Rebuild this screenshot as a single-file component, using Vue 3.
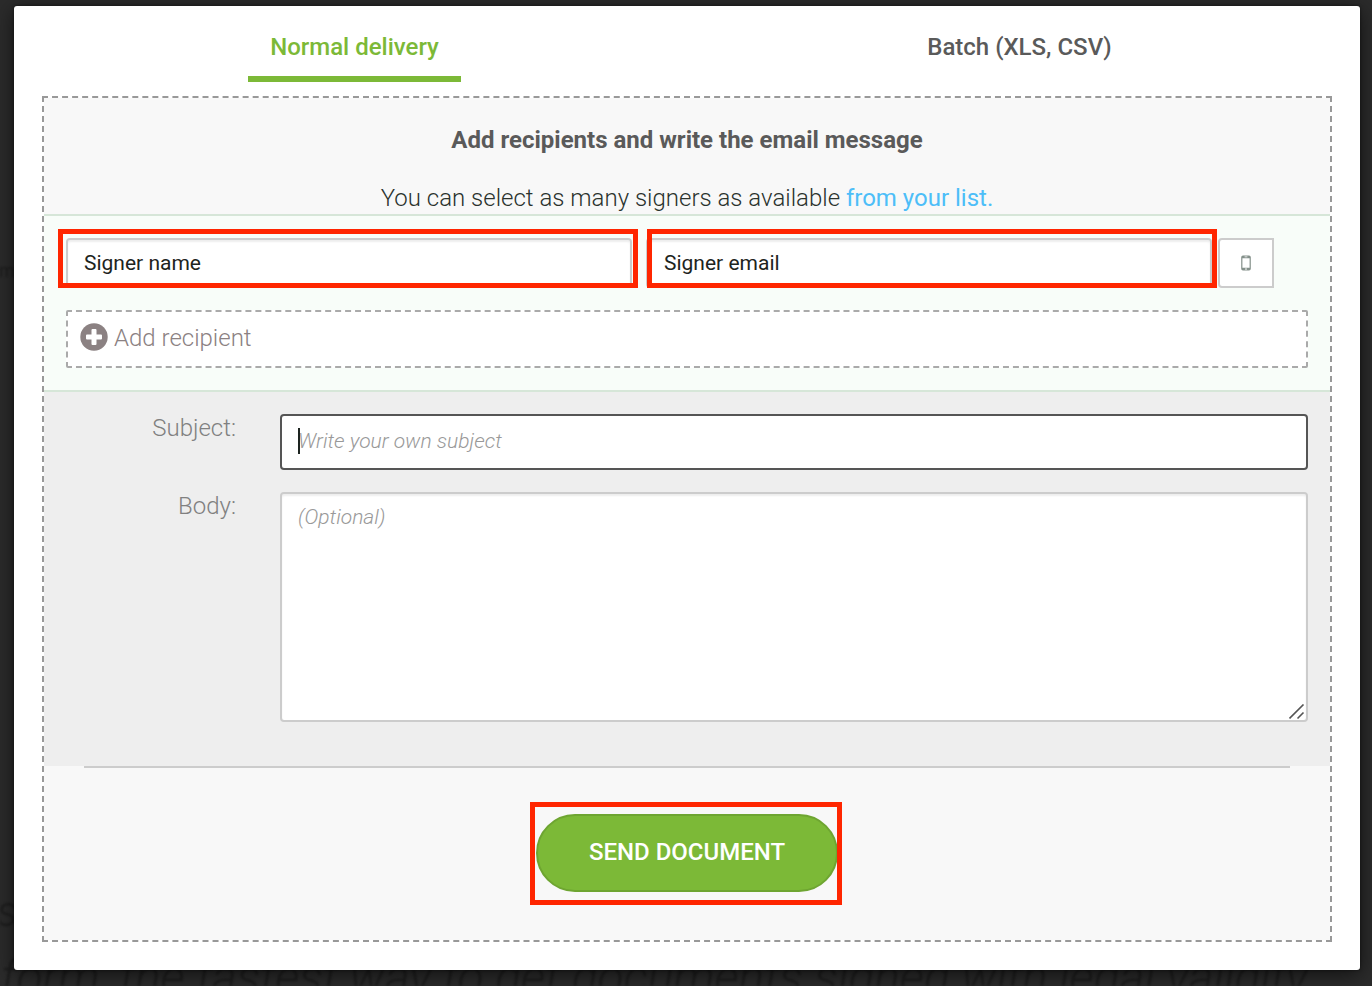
<script setup>
import { ref } from 'vue'

const tabs = [
  { id: 'normal', label: 'Normal delivery' },
  { id: 'batch', label: 'Batch (XLS, CSV)' },
]
const activeTab = ref('normal')
const signerName = ref('Signer name')
const signerEmail = ref('Signer email')
const subject = ref('')
const body = ref('')
</script>

<template>
  <div class="page">
    <div class="backdrop" aria-hidden="true">
      <span class="ghost ghost-small">m</span>
      <span class="ghost ghost-mid">s</span>
      <span class="ghost ghost-line">form, the fastest way to get documents signed with legal validity</span>
    </div>

    <main class="modal" role="dialog" aria-labelledby="dialog-title">
      <nav class="tabs" role="tablist">
        <div v-for="tab in tabs" :key="tab.id" class="tab-cell">
          <button
            type="button"
            role="tab"
            class="tab"
            :class="{ active: activeTab === tab.id }"
            :aria-selected="activeTab === tab.id"
            @click="activeTab = tab.id"
          >
            {{ tab.label }}
          </button>
        </div>
      </nav>

      <form class="panel" @submit.prevent>
        <header class="intro">
          <h1 id="dialog-title">Add recipients and write the email message</h1>
          <p>You can select as many signers as available <a href="#list">from your list.</a></p>
        </header>

        <section class="recipients">
          <div class="signer">
            <div class="signer-field name">
              <input v-model="signerName" class="field" type="text" aria-label="Signer name" />
              <span class="highlight"></span>
            </div>
            <div class="signer-field email">
              <input v-model="signerEmail" class="field" type="text" aria-label="Signer email" />
              <span class="highlight"></span>
            </div>
            <button type="button" class="phone" aria-label="Add phone number">
              <svg width="10" height="16" viewBox="0 0 10 16">
                <path
                  fill="#84908a"
                  fill-rule="evenodd"
                  d="M2 0.5h6a1.8 1.8 0 0 1 1.8 1.8v11.4a1.8 1.8 0 0 1-1.8 1.8H2a1.8 1.8 0 0 1-1.8-1.8V2.300a1.800 1.800 0 0 1 1.800-1.800zM1.400 3.300v9.400h7.200V3.300zM3.600 1.500v.8h2.800v-.8zM5 13.300a.8.8 0 1 0 0 1.600.8.8 0 0 0 0-1.600z"
                />
              </svg>
            </button>
          </div>
          <button type="button" class="add">
            <svg width="28" height="28" viewBox="0 0 28 28">
              <circle cx="14" cy="14" r="13.7" fill="#8b8182" />
              <path
                fill="#fff"
                d="M12.500 6h3a1 1 0 0 1 1 1v4.500H21a1 1 0 0 1 1 1v3a1 1 0 0 1-1 1h-4.500V21a1 1 0 0 1-1 1h-3a1 1 0 0 1-1-1v-4.500H7a1 1 0 0 1-1-1v-3a1 1 0 0 1 1-1h4.500V7a1 1 0 0 1 1-1z"
              />
            </svg>
            <span class="add-label">Add recipient</span>
          </button>
        </section>

        <section class="message">
          <label for="subject">Subject:</label>
          <div class="control">
            <input
              id="subject"
              v-model="subject"
              class="field subject"
              type="text"
              placeholder="Write your own subject"
            />
            <span class="caret"></span>
          </div>
          <label for="body">Body:</label>
          <div class="control">
            <textarea id="body" v-model="body" class="field body" placeholder="(Optional)"></textarea>
            <svg class="grip" width="16" height="16" viewBox="0 0 16 16">
              <path d="M0.500 14.500L14.500 0.500M8.500 14.500L14.500 8.500" fill="none" stroke="#555" stroke-width="1.6" />
            </svg>
          </div>
        </section>

        <footer class="actions">
          <hr />
          <div class="send-wrap">
            <button type="submit" class="send">SEND DOCUMENT</button>
            <span class="highlight"></span>
          </div>
        </footer>
      </form>
    </main>
  </div>
</template>

<style>
body {
  margin: 0;
  background: #2b2b2b;
}
</style>

<style scoped>
.page,
.page * {
  box-sizing: border-box;
}

.page {
  position: relative;
  overflow: hidden;
  min-height: 100vh;
  padding: 6px 12px 16px 14px;
  background: #2b2b2b;
  font-family: Roboto, "Liberation Sans", sans-serif;
  font-size: 24px;
  font-weight: 300;
  line-height: 28px;
  color: #2a322d;
}

button,
input,
textarea {
  font: inherit;
  margin: 0;
}

button {
  cursor: pointer;
}

.backdrop {
  position: absolute;
  inset: 0;
  overflow: hidden;
  color: #1c1c1c;
  filter: blur(1px);
}

.ghost {
  position: absolute;
  white-space: nowrap;
}

.ghost-small {
  left: -1px;
  top: 257px;
  font-size: 18px;
  font-weight: 400;
}

.ghost-mid {
  left: -3px;
  top: 890px;
  font-size: 42px;
  line-height: 44px;
  font-style: italic;
}

.ghost-line {
  left: 1px;
  top: 954px;
  font-size: 48px;
  line-height: 48px;
  font-style: italic;
}

.modal {
  position: relative;
  padding: 0 28px 28px;
  background: #fff;
  border-radius: 3px;
  box-shadow: 0 4px 20px rgba(0, 0, 0, 0.6), 0 0 3px rgba(0, 0, 0, 0.5);
}

.tabs {
  display: grid;
  grid-template-columns: 1fr 1fr;
  margin: 0 -20px 14px;
}

.tab-cell {
  text-align: center;
}

.tab {
  padding: 27px 22px 15px;
  border: 0;
  border-bottom: 6px solid transparent;
  background: none;
  font-weight: 500;
  color: #5a5a5a;
  vertical-align: top;
}

.tab.active {
  color: #7cb937;
  border-bottom-color: #7cb937;
}

.panel {
  border: 2px dashed #999;
  background: #f8f8f8;
  background-clip: padding-box;
}

.intro {
  padding: 28px 20px 2px;
  text-align: center;
}

.intro h1 {
  margin: 0 0 30px;
  font-size: 24px;
  line-height: 28px;
  font-weight: 700;
  color: #5a5a5a;
}

.intro p {
  margin: 0;
}

.intro a {
  color: #4dbef8;
  text-decoration: none;
  font-weight: 400;
}

.recipients {
  display: flex;
  flex-direction: column;
  gap: 22px;
  padding: 22px;
  border-top: 2px solid #d6e6d8;
  border-bottom: 2px solid #d6e6d8;
  background: #f8fdf9;
}

.signer {
  display: flex;
  padding-right: 34px;
}

.signer-field {
  position: relative;
  flex: 1;
}

.field {
  display: block;
  width: 100%;
  border: 2px solid #ccc;
  border-radius: 4px;
  background: #fff;
  box-shadow: inset 0 2px 2px rgba(0, 0, 0, 0.07);
  color: #1d2420;
  font-size: 21px;
  line-height: 26px;
  outline: none;
}

.signer-field .field {
  height: 50px;
  padding: 10px 16px;
  font-weight: 400;
}

.signer-field.name {
  margin-right: 14px;
}

.signer-field.email {
  margin-right: 6px;
}

.highlight {
  position: absolute;
  border: 5px solid #ff2600;
  pointer-events: none;
}

.name .highlight {
  inset: -9px -6px 0 -8px;
}

.email .highlight {
  inset: -9px -5px 0 1px;
}

.phone {
  display: flex;
  align-items: center;
  justify-content: center;
  width: 56px;
  height: 50px;
  padding: 0;
  border: 2px solid #ccc;
  border-radius: 4px 0 0 4px;
  background: #fff;
}

.add {
  display: flex;
  align-items: center;
  gap: 6px;
  height: 58px;
  padding: 0 12px 4px;
  border: 2px dashed #aaa;
  border-radius: 2px;
  background: #fff;
  color: #8b8182;
  font-weight: 300;
}

.add-label {
  padding-top: 2px;
}

.message {
  display: grid;
  grid-template-columns: 170px 1fr;
  column-gap: 44px;
  row-gap: 22px;
  padding: 22px 22px 44px;
  background: #eee;
}

.message label {
  text-align: right;
  color: #808080;
}

.control {
  position: relative;
}

.subject {
  height: 56px;
  padding: 0 16px 2px;
  border-color: #555;
  box-shadow: none;
}

.body {
  height: 230px;
  padding: 10px 16px;
  resize: none;
}

.field::placeholder {
  color: #999;
  opacity: 1;
  font-style: italic;
  font-weight: 300;
}

.caret {
  position: absolute;
  left: 18px;
  top: 14px;
  width: 2px;
  height: 26px;
  background: #1d2420;
}

.grip {
  position: absolute;
  right: 3px;
  bottom: 2px;
  pointer-events: none;
}

.actions {
  padding-bottom: 48px;
  text-align: center;
}

.actions hr {
  margin: 0 40px 46px;
  border: 0;
  border-top: 2px solid #ccc;
}

.send-wrap {
  position: relative;
  display: inline-block;
  vertical-align: top;
}

.send {
  display: block;
  height: 78px;
  padding: 0 51px 2px;
  border: 2px solid #6ea531;
  border-radius: 39px;
  background: #7cb937;
  color: #fff;
  font-weight: 500;
}

.send-wrap .highlight {
  inset: -12px -4px -13px -6px;
}
</style>
